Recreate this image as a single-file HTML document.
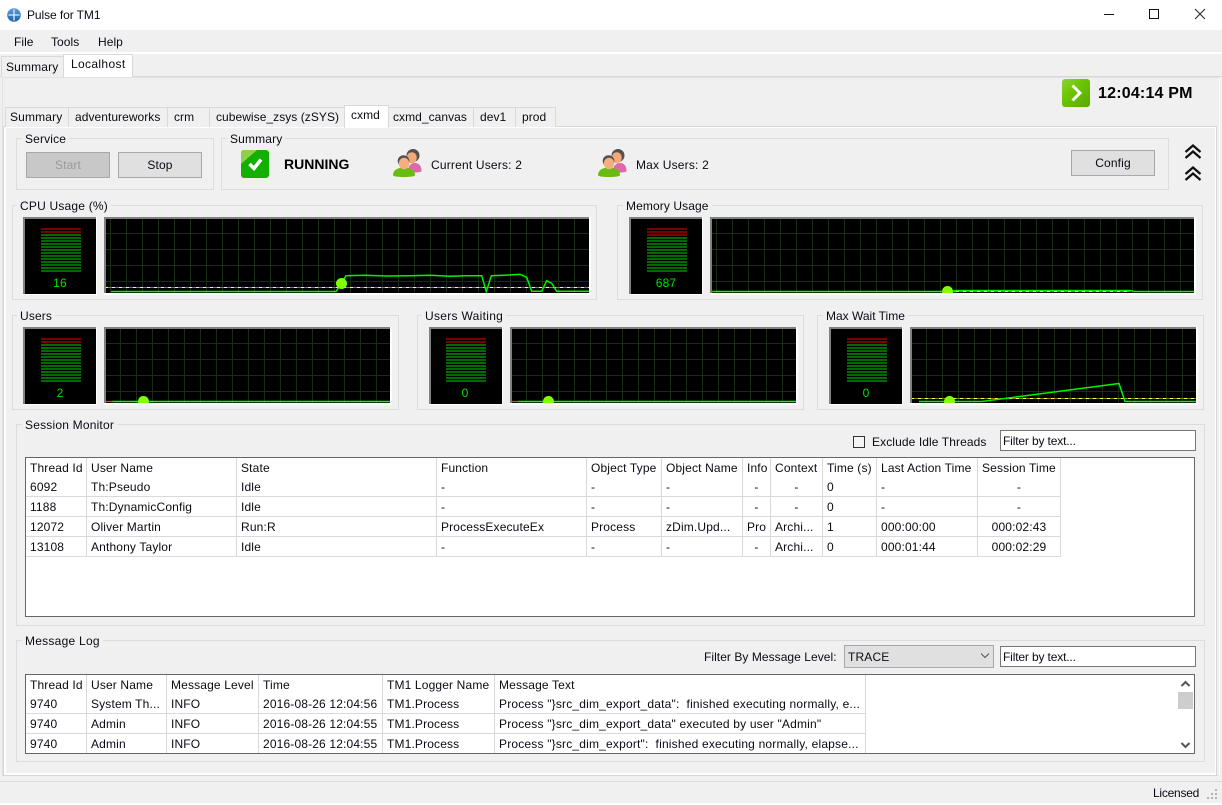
<!DOCTYPE html>
<html><head><meta charset="utf-8"><title>Pulse for TM1</title>
<style>
html,body{margin:0;padding:0;width:1222px;height:805px;overflow:hidden;background:#f0f0f0}
body{position:relative;font:12px/16px "Liberation Sans",Arial,sans-serif;color:#0a0a14;letter-spacing:.15px}
.a{position:absolute;box-sizing:border-box}
.t{position:absolute;white-space:pre;height:16px;line-height:16px}
.tl{position:absolute;white-space:pre;height:16px;line-height:16px;letter-spacing:.05px}
.tab{position:absolute;box-sizing:border-box;background:#f0f0f0;border:1px solid #d9d9d9;border-bottom:0}
.on{background:#fff}
.g{position:absolute;box-sizing:border-box;border:1px solid #dcdcdc}
.btn{position:absolute;box-sizing:border-box;background:#e0e0e0;border:1px solid #a8a8a8;text-align:center}
.in{position:absolute;box-sizing:border-box;background:#fff;border:1px solid #777;padding-left:2px;line-height:20px;letter-spacing:-.15px}
.num{position:absolute;width:74px;text-align:center;color:#00e000;height:16px;line-height:16px}
table{position:absolute;border-collapse:separate;border-spacing:0;table-layout:fixed;font-size:12px}
td,th{box-sizing:border-box;height:20px;padding:0 0 0 4px;border-right:1px solid #d9d9d9;border-bottom:1px solid #d9d9d9;font-weight:normal;text-align:left;white-space:pre;overflow:hidden;line-height:16px}
th{height:19px;border-bottom:0}
.c{text-align:center;padding:0}
.m{letter-spacing:.19px}
</style></head><body>

<!-- title bar -->
<div class="a" style="left:0;top:0;width:1222px;height:30px;background:#fff"></div>
<svg class="a" style="left:7px;top:8px" width="14" height="14" viewBox="0 0 14 14"><defs><linearGradient id="gl" x1="0" y1="0" x2="0" y2="1"><stop offset="0" stop-color="#5a9fd8"/><stop offset="1" stop-color="#1c62a8"/></linearGradient></defs><circle cx="7" cy="7" r="6.800" fill="url(#gl)"/><path d="M7 1.500V12.500M1.500 7H12.500" stroke="#dcebf8" stroke-width="1.300"/></svg>
<div class="t" style="left:27px;top:7px;letter-spacing:-.08px">Pulse for TM1</div>
<svg class="a" style="left:1100px;top:5px" width="110" height="20"><path d="M4 9.500H14" stroke="#111"/><path d="M49.500 4.500h9v9h-9z" fill="none" stroke="#111"/><path d="M95 4l10 10M105 4L95 14" stroke="#222" fill="none"/></svg>

<!-- menu -->
<div class="tl" style="left:14px;top:34px">File</div>
<div class="tl" style="left:51px;top:34px">Tools</div>
<div class="tl" style="left:98px;top:34px">Help</div>
<div class="a" style="left:0;top:52px;width:1222px;height:2px;background:#fff"></div>

<!-- outer pane + tabs -->
<div class="a" style="left:2px;top:77px;width:1218px;height:699px;border:1px solid #e2e2e2;border-right:1px solid #fff;background:#f0f0f0"></div>
<div class="a" style="left:0;top:76px;width:1222px;height:1px;background:#d9d9d9"></div>
<div class="tab" style="left:1px;top:56px;width:63px;height:21px"></div>
<div class="tab on" style="left:63px;top:54px;width:70px;height:23px"></div>
<div class="t" style="left:6px;top:59px">Summary</div>
<div class="t" style="left:71px;top:56px;letter-spacing:.35px">Localhost</div>

<!-- clock -->
<svg class="a" style="left:1062px;top:79px" width="28" height="28"><defs><linearGradient id="gr" x1="0" y1="0" x2="1" y2="1"><stop offset="0" stop-color="#8ed03e"/><stop offset=".4" stop-color="#6cc600"/><stop offset="1" stop-color="#58a800"/></linearGradient></defs><rect width="28" height="28" rx="3" fill="url(#gr)"/><path d="M10.500 6.500L18 14l-7.500 7.500" fill="none" stroke="#fff" stroke-width="3"/></svg>
<div class="t" style="left:1098px;top:86px;font-size:16px;font-weight:bold;color:#000;letter-spacing:.2px">12:04:14 PM</div>

<!-- inner pane -->
<div class="a" style="left:3px;top:126px;width:1214px;height:650px;border:1px solid #d6d6d6;background:#fff"></div>
<div class="a" style="left:6px;top:128px;width:1209px;height:645px;background:#f0f0f0"></div>

<div class="tab" style="left:5px;top:107px;width:64px;height:20px"></div>
<div class="tab" style="left:68px;top:107px;width:100px;height:20px"></div>
<div class="tab" style="left:167px;top:107px;width:43px;height:20px"></div>
<div class="tab" style="left:209px;top:107px;width:136px;height:20px"></div>
<div class="tab on" style="left:344px;top:105px;width:45px;height:23px"></div>
<div class="tab" style="left:388px;top:107px;width:86px;height:20px"></div>
<div class="tab" style="left:473px;top:107px;width:43px;height:20px"></div>
<div class="tab" style="left:515px;top:107px;width:41px;height:20px"></div>
<div class="t" style="left:10px;top:109px">Summary</div>
<div class="tl" style="left:75px;top:109px">adventureworks</div>
<div class="tl" style="left:174px;top:109px">crm</div>
<div class="tl" style="left:216px;top:109px">cubewise_zsys (zSYS)</div>
<div class="tl" style="left:351px;top:107px">cxmd</div>
<div class="tl" style="left:393px;top:109px">cxmd_canvas</div>
<div class="tl" style="left:480px;top:109px">dev1</div>
<div class="tl" style="left:522px;top:109px">prod</div>

<!-- service -->
<div class="g" style="left:16px;top:138px;width:198px;height:52px"></div>
<div class="t" style="left:22px;top:131px;background:#f0f0f0;padding:0 3px">Service</div>
<div class="btn" style="left:26px;top:152px;width:84px;height:26px;background:#c8c8c8;color:#9a9a9a;line-height:25px">Start</div>
<div class="btn" style="left:118px;top:152px;width:84px;height:26px;line-height:25px">Stop</div>

<!-- summary -->
<div class="g" style="left:221px;top:138px;width:948px;height:52px"></div>
<div class="t" style="left:227px;top:131px;background:#f0f0f0;padding:0 3px">Summary</div>
<svg class="a" style="left:241px;top:150px" width="28" height="28"><rect width="28" height="28" rx="3" fill="#12b000"/><path d="M3 0h13L0 14V3a3 3 0 0 1 3-3z" fill="#8fd04a"/><path d="M8.500 14l4.500 4.500L20 9.500" fill="none" stroke="#fff" stroke-width="3.500"/></svg>
<div class="t" style="left:284px;top:156px;font-size:14px;font-weight:bold;color:#000;letter-spacing:0">RUNNING</div>

<svg width="0" height="0" style="position:absolute"><defs><g id="u">
<path d="M15 22c0-5 3-8 7-8s6.500 3 6.500 8c0 1-3 1.500-6.500 1.500s-7-.5-7-1.500z" fill="#e068a8"/>
<circle cx="20" cy="6.500" r="6.500" fill="#55504e"/>
<ellipse cx="18.800" cy="8.700" rx="5" ry="5.500" fill="#f2a878"/>
<path d="M0 26c0-5 5-7.500 11-7.500s11 2.500 11 7.500c0 1.500-5 2-11 2s-11-.5-11-2z" fill="#68bc10"/>
<circle cx="10.500" cy="12" r="5.800" fill="#55504e"/>
<ellipse cx="11" cy="14.500" rx="5.200" ry="5.800" fill="#f4ae80"/>
</g></defs></svg>
<svg class="a" style="left:393px;top:149px" width="30" height="29"><use href="#u"/></svg>
<svg class="a" style="left:598px;top:149px" width="30" height="29"><use href="#u"/></svg>
<div class="t" style="left:431px;top:157px;letter-spacing:.19px">Current Users: 2</div>
<div class="t" style="left:636px;top:157px;letter-spacing:.19px">Max Users: 2</div>
<div class="btn" style="left:1071px;top:150px;width:84px;height:26px;line-height:24px">Config</div>
<svg class="a" style="left:1184px;top:144px" width="18" height="38"><path d="M1.500 8l7.500-6.500L16.500 8M1.500 14l7.500-6.500L16.500 14M1.500 30l7.500-6.500L16.500 30M1.500 36l7.500-6.500L16.500 36" fill="none" stroke="#111" stroke-width="2.200"/></svg>

<!-- metric groups -->
<div class="g" style="left:12px;top:205px;width:585px;height:95px"></div>
<div class="t" style="left:17px;top:198px;background:#f0f0f0;padding:0 3px;letter-spacing:.2px">CPU Usage (%)</div>
<div class="g" style="left:617px;top:205px;width:586px;height:95px"></div>
<div class="t" style="left:623px;top:198px;background:#f0f0f0;padding:0 3px;letter-spacing:.1px">Memory Usage</div>
<div class="g" style="left:12px;top:315px;width:387px;height:95px"></div>
<div class="t" style="left:17px;top:308px;background:#f0f0f0;padding:0 3px">Users</div>
<div class="g" style="left:417px;top:315px;width:387px;height:95px"></div>
<div class="t" style="left:422px;top:308px;background:#f0f0f0;padding:0 3px;letter-spacing:.3px">Users Waiting</div>
<div class="g" style="left:817px;top:315px;width:387px;height:95px"></div>
<div class="t" style="left:823px;top:308px;background:#f0f0f0;padding:0 3px;letter-spacing:0">Max Wait Time</div>

<svg class="a" style="left:0;top:0" width="1222" height="805">
<defs>
<pattern id="p1" x="110" y="233" width="16" height="16" patternUnits="userSpaceOnUse"><path d="M.5 0V16M0 .5H16" stroke="#182e10" fill="none"/></pattern>
<pattern id="p2" x="716" y="233" width="16" height="16" patternUnits="userSpaceOnUse"><path d="M.5 0V16M0 .5H16" stroke="#182e10" fill="none"/></pattern>
<pattern id="p3" x="120" y="343" width="16" height="16" patternUnits="userSpaceOnUse"><path d="M.5 0V16M0 .5H16" stroke="#182e10" fill="none"/></pattern>
<pattern id="p4" x="526" y="343" width="16" height="16" patternUnits="userSpaceOnUse"><path d="M.5 0V16M0 .5H16" stroke="#182e10" fill="none"/></pattern>
<pattern id="p5" x="926" y="343" width="16" height="16" patternUnits="userSpaceOnUse"><path d="M.5 0V16M0 .5H16" stroke="#182e10" fill="none"/></pattern>
<clipPath id="c1"><rect x="106" y="219" width="483" height="74"/></clipPath>
<clipPath id="c2"><rect x="712" y="219" width="482" height="74"/></clipPath>
<clipPath id="c3"><rect x="106" y="329" width="284" height="74"/></clipPath>
<clipPath id="c4"><rect x="512" y="329" width="284" height="74"/></clipPath>
<clipPath id="c5"><rect x="912" y="329" width="284" height="74"/></clipPath>
<g id="bars" shape-rendering="crispEdges">
<g fill="#7a0000"><rect y="0" width="40" height="2"/><rect y="3" width="40" height="2"/></g>
<g fill="#006a00"><rect y="6" width="40" height="2"/><rect y="9" width="40" height="2"/><rect y="12" width="40" height="2"/><rect y="15" width="40" height="2"/><rect y="18" width="40" height="2"/><rect y="21" width="40" height="2"/><rect y="24" width="40" height="2"/><rect y="27" width="40" height="2"/><rect y="30" width="40" height="2"/><rect y="33" width="40" height="2"/><rect y="36" width="40" height="2"/><rect y="39" width="40" height="2"/><rect y="42" width="40" height="2"/></g>
</g>
<g id="gauge"><rect width="74" height="78" fill="#fff"/><rect width="73" height="77" fill="#808080"/><rect x="2" y="2" width="71" height="75" fill="#000"/></g>
</defs>

<use href="#gauge" x="23" y="217"/><use href="#gauge" x="629" y="217"/><use href="#gauge" x="23" y="327"/><use href="#gauge" x="429" y="327"/><use href="#gauge" x="829" y="327"/>
<use href="#bars" x="41" y="228"/><use href="#bars" x="647" y="228"/><rect x="647" y="234" width="40" height="2" fill="#7a0000"/><use href="#bars" x="41" y="338"/><use href="#bars" x="446" y="338"/><use href="#bars" x="847" y="338"/>

<!-- charts: frames -->
<rect x="104" y="217" width="487" height="78" fill="#fff"/><rect x="104" y="217" width="485" height="76" fill="#808080"/><rect x="106" y="219" width="483" height="74" fill="#000"/><rect x="106" y="219" width="483" height="74" fill="url(#p1)"/>
<rect x="710" y="217" width="486" height="78" fill="#fff"/><rect x="710" y="217" width="484" height="76" fill="#808080"/><rect x="712" y="219" width="482" height="74" fill="#000"/><rect x="712" y="219" width="482" height="74" fill="url(#p2)"/>
<rect x="104" y="327" width="288" height="78" fill="#fff"/><rect x="104" y="327" width="286" height="76" fill="#808080"/><rect x="106" y="329" width="284" height="74" fill="#000"/><rect x="106" y="329" width="284" height="74" fill="url(#p3)"/>
<rect x="510" y="327" width="288" height="78" fill="#fff"/><rect x="510" y="327" width="286" height="76" fill="#808080"/><rect x="512" y="329" width="284" height="74" fill="#000"/><rect x="512" y="329" width="284" height="74" fill="url(#p4)"/>
<rect x="910" y="327" width="288" height="78" fill="#fff"/><rect x="910" y="327" width="286" height="76" fill="#808080"/><rect x="912" y="329" width="284" height="74" fill="#000"/><rect x="912" y="329" width="284" height="74" fill="url(#p5)"/>

<!-- CPU -->
<g clip-path="url(#c1)">
<path d="M105 287.500H589" stroke="#8a8400"/><path d="M105 287.500H589" stroke="#ffff60" stroke-dasharray="3 4"/>
<path d="M111 291.500H336L346 275.800L365 275.300L387 276L410 275.700L430 275.300L450 276.300L467 275.700L481.700 275.700L486.300 291.700L491.300 275.700L510 275L520 274.300L526.700 277.300L531.700 291.300H541.700L546.700 280.700L551.700 283.300L556.700 291.300H589" fill="none" stroke="#00f000" stroke-width="1.500"/>
<circle cx="341.500" cy="283.500" r="5.500" fill="#80ff00"/>
</g>
<!-- Memory -->
<g clip-path="url(#c2)">
<path d="M711 291.500H956" stroke="#00ff00" stroke-width="1.600"/>
<path d="M711 291.500H716" stroke="#b08000" stroke-width="1.300"/>
<path d="M951 291.500L956 290.500H1130L1134 291.500H1194" fill="none" stroke="#00f000" stroke-width="1.500"/>
<path d="M956 291.500H1130" stroke="#8a8400"/><path d="M956 291.500H1130" stroke="#ffff60" stroke-dasharray="3 4"/>
<circle cx="947.500" cy="291.500" r="5.500" fill="#80ff00"/>
</g>
<!-- Users -->
<g clip-path="url(#c3)">
<path d="M112 401.500H390" stroke="#00ff00" stroke-width="1.600"/><path d="M105 401.500H113" stroke="#a07000" stroke-width="1.300"/>
<circle cx="143.500" cy="401.500" r="5.500" fill="#80ff00"/>
</g>
<!-- Waiting -->
<g clip-path="url(#c4)">
<path d="M518 401.500H796" stroke="#00ff00" stroke-width="1.600"/><path d="M511 401.500H519" stroke="#a07000" stroke-width="1.300"/>
<circle cx="548.500" cy="401.500" r="5.500" fill="#80ff00"/>
</g>
<!-- Max wait -->
<g clip-path="url(#c5)">
<path d="M911 398.500H1196" stroke="#8a8400"/><path d="M911 398.500H1196" stroke="#ffff60" stroke-dasharray="3 4"/>
<path d="M919 401.500H981.700L1119 383.500L1125 401.500H1196" fill="none" stroke="#00f000" stroke-width="1.500"/>
<circle cx="949.500" cy="401.500" r="5.500" fill="#80ff00"/>
</g>
</svg>

<div class="num" style="left:23px;top:275px">16</div>
<div class="num" style="left:629px;top:275px">687</div>
<div class="num" style="left:23px;top:385px">2</div>
<div class="num" style="left:428px;top:385px">0</div>
<div class="num" style="left:829px;top:385px">0</div>

<!-- Session Monitor -->
<div class="g" style="left:16px;top:424px;width:1189px;height:202px"></div>
<div class="t" style="left:22px;top:417px;background:#f0f0f0;padding:0 3px;letter-spacing:.2px">Session Monitor</div>
<div class="a" style="left:853px;top:436px;width:12px;height:12px;border:1px solid #333;background:#f4f4f4"></div>
<div class="t" style="left:872px;top:434px;letter-spacing:.1px">Exclude Idle Threads</div>
<div class="in" style="left:1000px;top:430px;width:196px;height:21px">Filter by text...</div>
<div class="a" style="left:25px;top:457px;width:1170px;height:160px;border:1px solid #666;background:#fff"></div>
<table style="left:26px;top:458px;width:1035px">
<colgroup><col style="width:61px"><col style="width:150px"><col style="width:200px"><col style="width:150px"><col style="width:75px"><col style="width:81px"><col style="width:28px"><col style="width:52px"><col style="width:54px"><col style="width:101px"><col style="width:83px"></colgroup>
<tr><th>Thread Id</th><th>User Name</th><th>State</th><th>Function</th><th>Object Type</th><th>Object Name</th><th>Info</th><th>Context</th><th>Time (s)</th><th>Last Action Time</th><th>Session Time</th></tr>
<tr><td>6092</td><td>Th:Pseudo</td><td>Idle</td><td>-</td><td>-</td><td>-</td><td class="c">-</td><td class="c">-</td><td>0</td><td>-</td><td class="c">-</td></tr>
<tr><td>1188</td><td>Th:DynamicConfig</td><td>Idle</td><td>-</td><td>-</td><td>-</td><td class="c">-</td><td class="c">-</td><td>0</td><td>-</td><td class="c">-</td></tr>
<tr><td>12072</td><td>Oliver Martin</td><td>Run:R</td><td>ProcessExecuteEx</td><td>Process</td><td>zDim.Upd...</td><td class="c">Pro</td><td>Archi...</td><td>1</td><td>000:00:00</td><td class="c">000:02:43</td></tr>
<tr><td>13108</td><td>Anthony Taylor</td><td>Idle</td><td>-</td><td>-</td><td>-</td><td class="c">-</td><td>Archi...</td><td>0</td><td>000:01:44</td><td class="c">000:02:29</td></tr>
</table>

<!-- Message Log -->
<div class="g" style="left:16px;top:640px;width:1189px;height:122px"></div>
<div class="t" style="left:22px;top:633px;background:#f0f0f0;padding:0 3px;letter-spacing:.25px">Message Log</div>
<div class="t" style="left:704px;top:649px;letter-spacing:.05px">Filter By Message Level:</div>
<div class="a" style="left:844px;top:645px;width:150px;height:23px;background:#e0e0e0;border:1px solid #a8a8a8;padding-left:3px;line-height:22px">TRACE</div>
<svg class="a" style="left:980px;top:652px" width="10" height="8"><path d="M1 1.500l4 4 4-4" fill="none" stroke="#555"/></svg>
<div class="in" style="left:1000px;top:646px;width:196px;height:21px">Filter by text...</div>
<div class="a" style="left:25px;top:674px;width:1170px;height:80px;border:1px solid #666;background:#fff;overflow:hidden"></div>
<table style="left:26px;top:675px;width:840px">
<colgroup><col style="width:61px"><col style="width:80px"><col style="width:92px"><col style="width:124px"><col style="width:112px"><col style="width:371px"></colgroup>
<tr><th>Thread Id</th><th>User Name</th><th>Message Level</th><th>Time</th><th>TM1 Logger Name</th><th>Message Text</th></tr>
<tr><td>9740</td><td>System Th...</td><td>INFO</td><td>2016-08-26 12:04:56</td><td>TM1.Process</td><td class="m">Process "}src_dim_export_data":  finished executing normally, e...</td></tr>
<tr><td>9740</td><td>Admin</td><td>INFO</td><td>2016-08-26 12:04:55</td><td>TM1.Process</td><td class="m">Process "}src_dim_export_data" executed by user "Admin"</td></tr>
<tr><td style="border-bottom:0;height:19px">9740</td><td style="border-bottom:0;height:19px">Admin</td><td style="border-bottom:0;height:19px">INFO</td><td style="border-bottom:0;height:19px">2016-08-26 12:04:55</td><td style="border-bottom:0;height:19px">TM1.Process</td><td class="m" style="border-bottom:0;height:19px">Process "}src_dim_export":  finished executing normally, elapse...</td></tr>
</table>
<div class="a" style="left:1178px;top:692px;width:15px;height:17px;background:#cdcdcd"></div>
<svg class="a" style="left:1178px;top:680px" width="15" height="70"><path d="M3.500 6L7.500 2l4 4M3.500 63l4 4 4-4" fill="none" stroke="#555" stroke-width="2"/></svg>

<!-- status -->
<div class="a" style="left:0;top:781px;width:1222px;height:1px;background:#dcdcdc"></div>
<div class="t" style="left:1153px;top:785px;letter-spacing:-.25px">Licensed</div>
<svg class="a" style="left:1206px;top:788px" width="12" height="12" fill="#b4b4b4"><rect x="9" y="1" width="2" height="2"/><rect x="5" y="5" width="2" height="2"/><rect x="9" y="5" width="2" height="2"/><rect x="1" y="9" width="2" height="2"/><rect x="5" y="9" width="2" height="2"/><rect x="9" y="9" width="2" height="2"/></svg>
<div class="a" style="left:0;top:803px;width:1222px;height:2px;background:#fff"></div>
</body></html>
